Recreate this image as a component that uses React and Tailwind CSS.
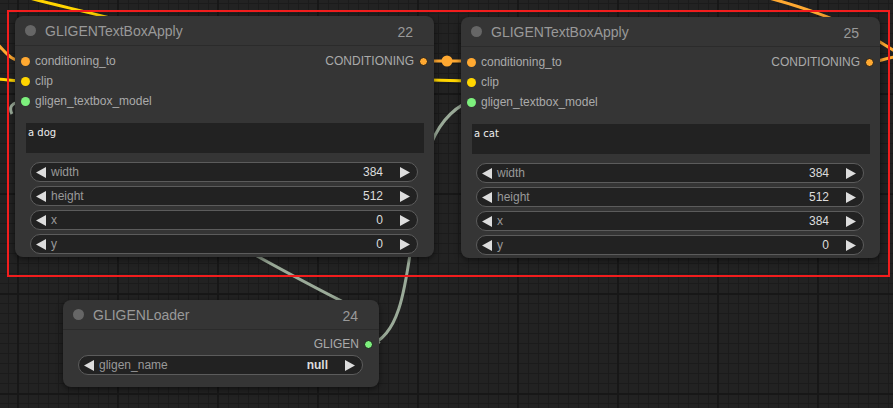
import React from "react";

const FONT = { fontFamily: '"Liberation Sans", Arial, sans-serif' };

function Tri({ dir }) {
  return (
    <svg width="10" height="11" viewBox="0 0 10 11" className="shrink-0">
      {dir === "l" ? (
        <polygon points="10,0 10,11 0,5.5" fill="#dddddd" />
      ) : (
        <polygon points="0,0 0,11 10,5.5" fill="#dddddd" />
      )}
    </svg>
  );
}

function Widget({ label, value, bold }) {
  return (
    <div className="flex h-[20px] items-center rounded-full border border-[#5c5c5c] bg-[#222222] pl-[5px] pr-[7px] text-[12px]">
      <Tri dir="l" />
      <span className="ml-[5px] text-[#999999]">{label}</span>
      <span className={"ml-auto mr-[17px] text-[#dddddd] " + (bold ? "font-bold" : "")}>{value}</span>
      <Tri dir="r" />
    </div>
  );
}

function Dot({ color, outline }) {
  return (
    <span
      className={"block h-[9px] w-[9px] shrink-0 rounded-full " + (outline ? "border border-[#1a1a1a]" : "")}
      style={{ backgroundColor: color }}
    />
  );
}

function Title({ title, id }) {
  return (
    <div className="flex h-[30px] items-center border-b border-[#2b2b2b] pl-[10px] pr-[21px]">
      <span className="block h-[11px] w-[11px] rounded-full bg-[#666666]" />
      <span className="ml-[9px] mt-[1px] text-[14px] text-[#999999]">{title}</span>
      <span className="ml-auto mt-[4px] text-[14px] text-[#999999]">{id}</span>
    </div>
  );
}

function TextBoxNode({ left, top, id, text, x }) {
  return (
    <div
      className="absolute flex w-[419px] h-[241px] flex-col rounded-[8px] bg-[#353535] shadow-[0_2px_6px_rgba(0,0,0,0.55)]"
      style={{ left, top, ...FONT }}
    >
      <Title title="GLIGENTextBoxApply" id={id} />
      <div className="relative mt-[5px] flex flex-col text-[12px] text-[#aaaaaa]">
        <div className="flex h-[20px] items-center pl-[6px]">
          <Dot color="#ffa931" />
          <span className="ml-[5px]">conditioning_to</span>
          <span className="ml-auto mr-[5px]">CONDITIONING</span>
          <span className="mr-[6px]"><Dot color="#ffa931" outline /></span>
        </div>
        <div className="flex h-[20px] items-center pl-[6px]">
          <Dot color="#ffd500" />
          <span className="ml-[5px]">clip</span>
        </div>
        <div className="flex h-[20px] items-center pl-[6px]">
          <Dot color="#7df07d" />
          <span className="ml-[5px]">gligen_textbox_model</span>
        </div>
      </div>
      <div
        className="mx-[10px] mt-[12px] ml-[11px] h-[30px] bg-[#222222] px-[2px] pt-[2px] text-[10px] text-[#eeeeee]"
        style={{ fontFamily: '"DejaVu Sans", sans-serif' }}
      >
        {text}
      </div>
      <div className="mt-[9px] ml-[15px] mr-[16px] flex flex-col gap-[4px]">
        <Widget label="width" value="384" />
        <Widget label="height" value="512" />
        <Widget label="x" value={x} />
        <Widget label="y" value="0" />
      </div>
    </div>
  );
}

function LoaderNode() {
  return (
    <div
      className="absolute left-[63px] top-[300px] flex h-[87px] w-[316px] flex-col rounded-[8px] bg-[#353535] shadow-[0_2px_6px_rgba(0,0,0,0.55)]"
      style={FONT}
    >
      <Title title="GLIGENLoader" id="24" />
      <div className="mt-[4px] flex h-[20px] items-center justify-end text-[12px] text-[#aaaaaa]">
        <span className="mr-[5px]">GLIGEN</span>
        <span className="mr-[6px]"><Dot color="#7df07d" outline /></span>
      </div>
      <div className="mt-[1px] ml-[15px] mr-[16px]">
        <Widget label="gligen_name" value="null" bold />
      </div>
    </div>
  );
}

export default function App() {
  return (
    <div
      className="relative h-[408px] w-[893px] overflow-hidden bg-[#222222]"
      style={FONT}
    >
      <div className="absolute inset-0 bg-[linear-gradient(to_right,#1b1b1b_1px,transparent_1px),linear-gradient(to_bottom,#1b1b1b_1px,transparent_1px)] bg-[size:10px_10px] bg-[position:8px_3px]" />
      <div className="absolute inset-0 bg-[linear-gradient(to_right,#171717_2px,transparent_2px),linear-gradient(to_bottom,#171717_2px,transparent_2px)] bg-[size:100px_100px] bg-[position:17px_93px]" />
      <svg className="absolute inset-0" width="893" height="408" viewBox="0 0 893 408" fill="none">
        <path d="M26,-3 C50,4 80,10 110,18" stroke="#ffd500" strokeWidth="3" />
        <path d="M-5,42 C5,50 8,61 25,61" stroke="#ffa931" strokeWidth="3" />
        <path d="M-5,79 C5,79 12,81 25,81" stroke="#ffd500" strokeWidth="3" />
        <path d="M12,114 C9,108 10,102 25,101" stroke="#9aaa98" strokeWidth="3" />
        <path d="M250,252 C285,272 320,290 345,303" stroke="#9aaa98" strokeWidth="3" />
        <path d="M369,345 C398,337 405,292 412,240 C420,175 426,120 470,101" stroke="#9aaa98" strokeWidth="3" />
        <path d="M372,348 L380,342" stroke="#9aaa98" strokeWidth="2" />
        <path d="M424,61 L470,61" stroke="#ffa931" strokeWidth="3" />
        <circle cx="447" cy="61" r="5.5" fill="#ffa931" />
        <path d="M430,80 L470,81" stroke="#ffd500" strokeWidth="3" />
        <path d="M765,-3 C815,10 860,28 896,52" stroke="#ffa931" strokeWidth="3" />
        <path d="M870,62 C880,62 884,58 896,57" stroke="#ffa931" strokeWidth="3" />
      </svg>
      <TextBoxNode left={15} top={16} id="22" text="a dog" x="0" />
      <TextBoxNode left={461} top={17} id="25" text="a cat" x="384" />
      <LoaderNode />
      <div className="pointer-events-none absolute left-[7px] top-[10px] h-[267px] w-[883px] border-2 border-[#f21d1d]" />
    </div>
  );
}
